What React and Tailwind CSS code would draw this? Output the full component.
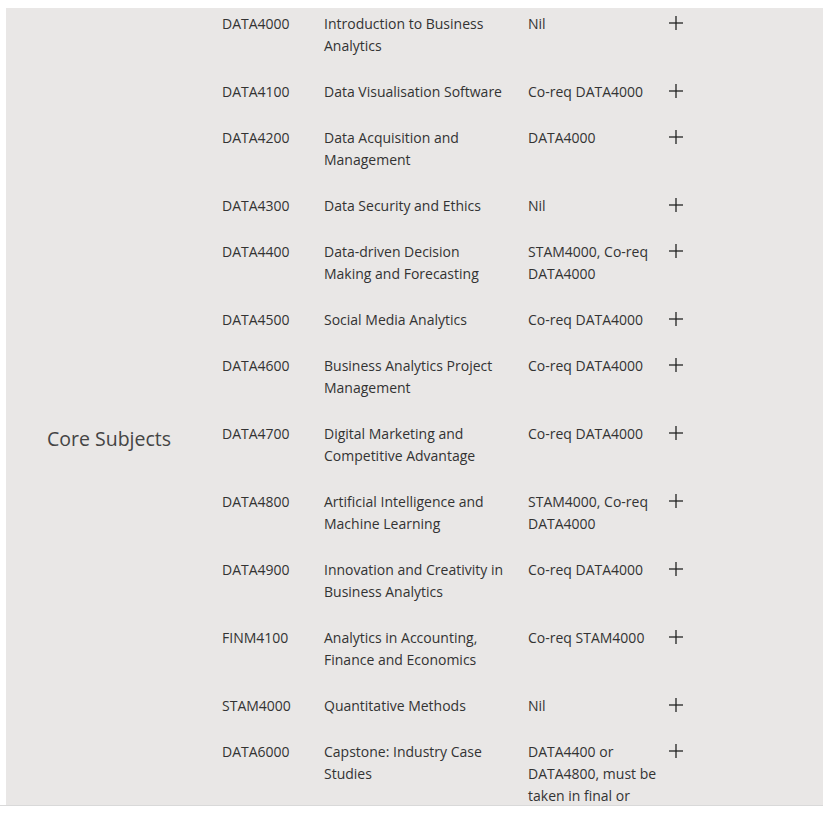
const subjects = [
  ['DATA4000', 'Introduction to Business Analytics', 'Nil'],
  ['DATA4100', 'Data Visualisation Software', 'Co-req DATA4000'],
  ['DATA4200', 'Data Acquisition and Management', 'DATA4000'],
  ['DATA4300', 'Data Security and Ethics', 'Nil'],
  ['DATA4400', 'Data-driven Decision Making and Forecasting', 'STAM4000, Co-req DATA4000'],
  ['DATA4500', 'Social Media Analytics', 'Co-req DATA4000'],
  ['DATA4600', 'Business Analytics Project Management', 'Co-req DATA4000'],
  ['DATA4700', 'Digital Marketing and Competitive Advantage', 'Co-req DATA4000'],
  ['DATA4800', 'Artificial Intelligence and Machine Learning', 'STAM4000, Co-req DATA4000'],
  ['DATA4900', 'Innovation and Creativity in Business Analytics', 'Co-req DATA4000'],
  ['FINM4100', 'Analytics in Accounting, Finance and Economics', 'Co-req STAM4000'],
  ['STAM4000', 'Quantitative Methods', 'Nil'],
  ['DATA6000', 'Capstone: Industry Case Studies', 'DATA4400 or DATA4800, must be taken in final or penultimate trimester'],
]

export default function App() {
  return (
    <div className="min-h-screen bg-white pt-[8px] font-['Open_Sans',sans-serif]">
      <div className="border-b border-[#d9d9d9]">
        <div className="ml-[6px] flex h-[797px] overflow-hidden bg-[#e9e7e6]">
          <div className="w-[216px] shrink-0 pl-[41px] pt-[417px]">
            <h2 className="text-[19.5px] leading-[28px] text-[#444]">Core Subjects</h2>
          </div>
          <div className="flex flex-col">
            {subjects.map(([code, title, prereq]) => (
              <Row key={code} code={code} title={title} prereq={prereq} />
            ))}
          </div>
        </div>
      </div>
    </div>
  )
}

function Row({ code, title, prereq }) {
  return (
    <div className="flex pt-[5px] pb-[19px] text-[14px] leading-[22px] text-[#333]">
      <div className="w-[102px] shrink-0">{code}</div>
      <div className="w-[204px] shrink-0 pr-[22px]">{title}</div>
      <div className="w-[141px] shrink-0 pr-[5px]">{prereq}</div>
      <button className="mt-[3px] h-[14px] w-[14px] shrink-0 text-[#222]">
        <svg width="14" height="14" viewBox="0 0 14 14" fill="none" stroke="currentColor" strokeWidth="1.3">
          <line x1="0" y1="7" x2="14" y2="7" />
          <line x1="7" y1="0" x2="7" y2="14" />
        </svg>
      </button>
    </div>
  )
}
